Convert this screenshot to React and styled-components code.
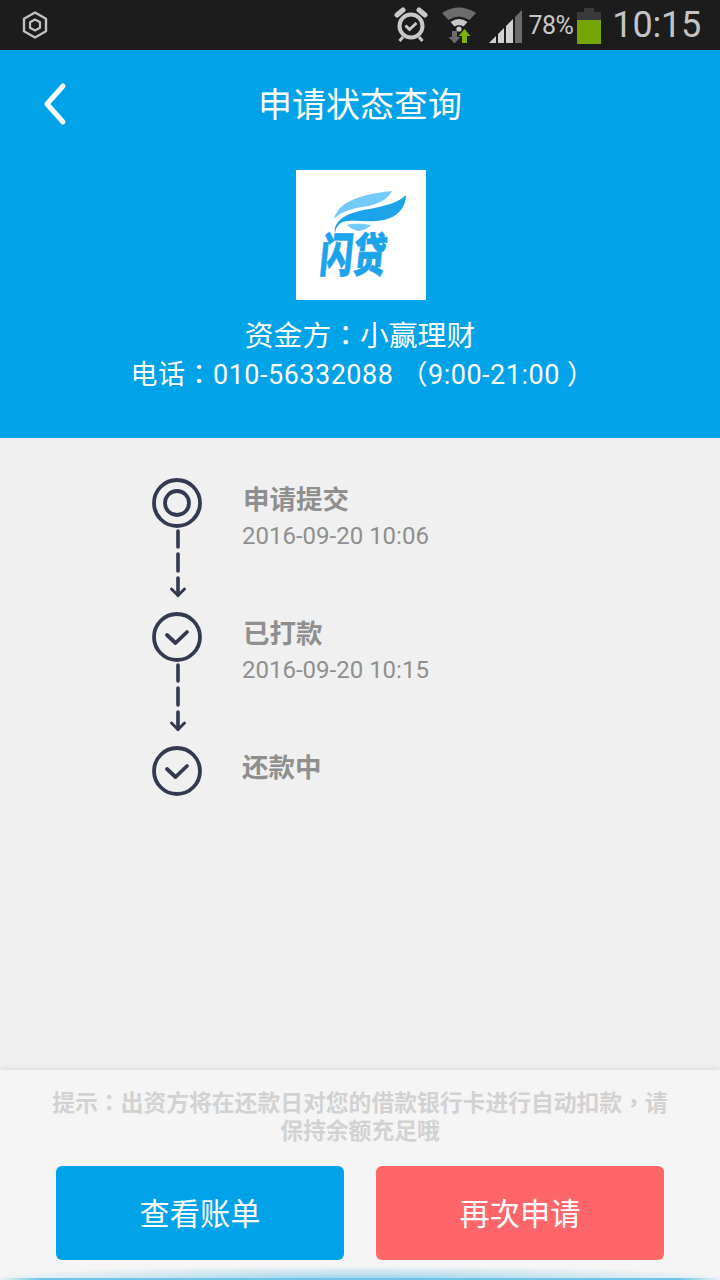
import React from "react";
import styled, { createGlobalStyle } from "styled-components";

const FONT = `Roboto, "Noto Sans CJK TC", sans-serif`;

const GlobalStyle = createGlobalStyle`
  html, body {
    margin: 0;
    padding: 0;
    background: #f0f0f0;
  }
  * {
    box-sizing: border-box;
  }
`;

const Page = styled.div`
  display: flex;
  flex-direction: column;
  width: 720px;
  height: 1280px;
  overflow: hidden;
  font-family: ${FONT};
  background: #f0f0f0;
`;

const StatusBar = styled.div`
  display: flex;
  align-items: center;
  flex: none;
  height: 50px;
  padding: 0 19px 0 20px;
  background: #1c1c1c;
`;

const StatusRight = styled.div`
  display: flex;
  align-items: center;
  margin-left: auto;
`;

const BatteryText = styled.span`
  margin: 0 4px 0 5px;
  font-size: 25px;
  letter-spacing: -0.5px;
  color: #c8c8c8;
`;

const Clock = styled.span`
  margin-left: 11px;
  font-size: 36px;
  letter-spacing: -0.2px;
  color: #c4c4c4;
`;

const Header = styled.header`
  display: flex;
  flex-direction: column;
  align-items: center;
  flex: none;
  height: 388px;
  background: #00a2e8;
  color: #fff;
`;

const NavBar = styled.div`
  display: flex;
  align-items: center;
  justify-content: center;
  position: relative;
  width: 100%;
  height: 110px;
`;

const BackButton = styled.svg`
  position: absolute;
  left: 41px;
  top: 32px;
  width: 28px;
  height: 44px;
`;

const Title = styled.h1`
  margin: 0;
  font-size: 34px;
  font-weight: 400;
  line-height: 1;
`;

const LogoBox = styled.div`
  position: relative;
  width: 130px;
  height: 130px;
  margin: 10px 0 0 2px;
  background: #fff;
`;

const LogoMark = styled.svg`
  display: block;
  width: 130px;
  height: 130px;
`;

const LogoText = styled.span`
  position: absolute;
  left: 27px;
  top: 58px;
  font-size: 33px;
  font-weight: 900;
  line-height: 1.2;
  white-space: nowrap;
  color: #1ba4ea;
  -webkit-text-stroke: 0.5px #1ba4ea;
  transform-origin: left top;
  transform: scaleY(1.42) skewX(-8deg);
`;

const Funder = styled.div`
  margin-top: 18px;
  font-size: 28.8px;
  line-height: 36px;
`;

const Phone = styled.div`
  margin: 3px 0 0 5px;
  font-size: 27px;
  line-height: 36px;
  letter-spacing: 0.5px;
  white-space: pre;
`;

const Timeline = styled.main`
  display: flex;
  flex-direction: column;
  flex: 1;
  padding: 40px 0 0 152px;
`;

const Step = styled.div`
  display: flex;
  height: ${(p) => (p.$last ? "50px" : "134px")};
`;

const Track = styled.div`
  display: flex;
  flex-direction: column;
  align-items: center;
  flex: none;
  width: 50px;
`;

const StepIcon = styled.svg`
  flex: none;
  width: 50px;
  height: 50px;
`;

const Connector = styled.svg`
  flex: none;
  width: 20px;
  height: 73px;
  margin-top: 1px;
`;

const StepBody = styled.div`
  display: flex;
  flex-direction: column;
  margin-left: ${(p) => (p.$last ? "40px" : "41px")};
  padding-top: 6px;
`;

const StepTitle = styled.div`
  font-size: 26.5px;
  font-weight: 700;
  line-height: 32px;
  color: #8f8f8f;
`;

const StepTime = styled.div`
  margin-top: 4px;
  margin-left: -1px;
  font-size: 24px;
  line-height: 32px;
  color: #8f8f8f;
`;

const Panel = styled.footer`
  display: flex;
  flex-direction: column;
  align-items: center;
  position: relative;
  flex: none;
  height: 210px;
  padding-top: 20px;
  background: #f5f5f5;
  box-shadow: 0 -1px 7px rgba(0, 0, 0, 0.09);

  &::after {
    content: "";
    position: absolute;
    left: 0;
    right: 0;
    bottom: 0;
    height: 14px;
    background:
      linear-gradient(90deg, rgba(110, 195, 230, 0) 0%, #6ec3e6 6%, #6ec3e6 94%, rgba(110, 195, 230, 0) 100%) bottom / 100% 2px no-repeat,
      radial-gradient(ellipse 55% 100% at 50% 100%, rgba(110, 195, 230, 0.75) 0%, rgba(110, 195, 230, 0.35) 50%, rgba(244, 244, 244, 0) 100%);
  }
`;

const Hint = styled.p`
  width: 620px;
  margin: 0;
  font-size: 22.8px;
  font-weight: 700;
  line-height: 28px;
  text-align: center;
  color: #d2d2d2;
`;

const Actions = styled.div`
  display: flex;
  gap: 32px;
  margin-top: 20px;
`;

const ActionButton = styled.button`
  width: 288px;
  height: 94px;
  padding: 0 0 3px;
  border: 0;
  border-radius: 6px;
  font-family: ${FONT};
  font-size: 30.2px;
  color: #fff;
  background: ${(p) => p.$bg};
`;

function HexIcon() {
  return (
    <svg width="30" height="30" viewBox="0 0 30 30" fill="none" stroke="#c0c0c0">
      <path d="M15 2.5 L26 8.8 V21.2 L15 27.5 L4 21.2 V8.8 Z" strokeWidth="2.4" strokeLinejoin="round" />
      <path d="M15 9.5 L20 12.2 V17.8 L15 20.5 L10 17.8 V12.2 Z" strokeWidth="2.2" strokeLinejoin="round" />
    </svg>
  );
}

function AlarmIcon() {
  return (
    <svg width="34" height="36" viewBox="0 0 34 36" fill="none" stroke="#c8c8c8">
      <circle cx="17" cy="19" r="11.5" strokeWidth="4" />
      <path d="M11.5 18.5 L15.5 22.5 L22.5 16" strokeWidth="3" />
      <path d="M3 8 L9 3 M31 8 L25 3" strokeWidth="5" strokeLinecap="round" />
      <path d="M9 30 L5.5 34 M25 30 L28.5 34" strokeWidth="3" />
    </svg>
  );
}

function WifiIcon() {
  return (
    <svg width="36" height="36" viewBox="0 0 36 36" fill="none" style={{ marginLeft: 13 }}>
      <path d="M1 6 Q18 -5 35 6 L28.5 13 Q18 6 7.5 13 Z" fill="#6c6c6c" />
      <path d="M9.5 15 Q18 9 26.5 15 L22.5 19.5 Q18 16.5 13.5 19.5 Z" fill="#c8c8c8" />
      <circle cx="18" cy="22" r="2.6" fill="#c8c8c8" />
      <path d="M11 36 V30 H7.5 L13.5 23.5 L19.5 30 H16 V36 Z" fill="#6c6c6c" transform="rotate(180 13.5 30)" />
      <path d="M21 36 V29 H17.5 L23.5 22 L29.5 29 H26 V36 Z" fill="#7cb300" />
    </svg>
  );
}

function SignalIcon() {
  return (
    <svg width="34" height="34" viewBox="0 0 34 34" style={{ marginLeft: 12, marginTop: 3 }}>
      <path d="M0 33 L7 26 V33 Z" fill="#d0d0d0" />
      <path d="M9 33 V24 L15 18 V33 Z" fill="#d0d0d0" />
      <path d="M17 33 V16 L24 9 V33 Z" fill="#d0d0d0" />
      <path d="M26 33 V7 L33 0 V33 Z" fill="#6c6c6c" />
    </svg>
  );
}

function BatteryIcon() {
  return (
    <svg width="24" height="36" viewBox="0 0 24 36" style={{ marginTop: 2 }}>
      <rect x="7" y="0" width="10" height="5" fill="#3a3a3a" />
      <rect x="0" y="4" width="24" height="8" fill="#3a3a3a" />
      <rect x="0" y="12" width="24" height="24" fill="#74a500" />
    </svg>
  );
}

function LogoWing() {
  return (
    <LogoMark viewBox="0 0 130 130">
      <path d="M38 49 C42 34 58 25 96 21 C92 29 84 33 73 36 C60 38 46 40 38 49 Z" fill="#74caf9" />
      <path d="M39 63 C37 50 52 42 74 39 C88 36 102 33 110 25 C110 38 101 47 88 50 C72 53 58 49 47 52 C42 54 40 58 39 63 Z" fill="#1ba4ea" />
      <path d="M51 55 C58 53 66 54 75 55 C71 59 65 61 62 61 C58 60 54 58 51 55 Z" fill="#74caf9" />
    </LogoMark>
  );
}

function RingIcon() {
  return (
    <StepIcon viewBox="0 0 50 50" fill="none" stroke="#33394f">
      <circle cx="25" cy="25" r="23" strokeWidth="3.8" />
      <circle cx="25" cy="25" r="12" strokeWidth="3.8" />
    </StepIcon>
  );
}

function CheckIcon() {
  return (
    <StepIcon viewBox="0 0 50 50" fill="none" stroke="#33394f">
      <circle cx="25" cy="25" r="23" strokeWidth="3.8" />
      <path d="M15 23 L23.5 31 L35 20" strokeWidth="3.8" strokeLinecap="round" strokeLinejoin="round" />
    </StepIcon>
  );
}

function DashedArrow() {
  return (
    <Connector viewBox="0 0 20 73" fill="none" stroke="#33394f" strokeLinecap="round">
      <path d="M11 2 V18 M11 25 V42 M11 49 V66" strokeWidth="3.6" />
      <path d="M4.5 60 L11 66.5 L17.5 60" strokeWidth="3" />
    </Connector>
  );
}

export default function App() {
  const steps = [
    { id: 1, title: "申请提交", time: "2016-09-20 10:06", icon: <RingIcon /> },
    { id: 2, title: "已打款", time: "2016-09-20 10:15", icon: <CheckIcon /> },
    { id: 3, title: "还款中", icon: <CheckIcon /> },
  ];

  return (
    <Page>
      <GlobalStyle />
      <StatusBar>
        <HexIcon />
        <StatusRight>
          <AlarmIcon />
          <WifiIcon />
          <SignalIcon />
          <BatteryText>78%</BatteryText>
          <BatteryIcon />
          <Clock>10:15</Clock>
        </StatusRight>
      </StatusBar>

      <Header>
        <NavBar>
          <BackButton viewBox="0 0 28 44" fill="none" stroke="#fff">
            <path d="M22 4 L6 22 L22 40" strokeWidth="5" strokeLinecap="round" strokeLinejoin="round" />
          </BackButton>
          <Title>申请状态查询</Title>
        </NavBar>
        <LogoBox>
          <LogoWing />
          <LogoText>闪贷</LogoText>
        </LogoBox>
        <Funder>资金方：小赢理财</Funder>
        <Phone>电话：010-56332088 （9:00-21:00 ）</Phone>
      </Header>

      <Timeline>
        {steps.map((step, i) => {
          const last = i === steps.length - 1;
          return (
            <Step key={step.id} $last={last}>
              <Track>
                {step.icon}
                {!last && <DashedArrow />}
              </Track>
              <StepBody $last={last}>
                <StepTitle>{step.title}</StepTitle>
                {step.time && <StepTime>{step.time}</StepTime>}
              </StepBody>
            </Step>
          );
        })}
      </Timeline>

      <Panel>
        <Hint>提示：出资方将在还款日对您的借款银行卡进行自动扣款，请保持余额充足哦</Hint>
        <Actions>
          <ActionButton $bg="#00a2e8">查看账单</ActionButton>
          <ActionButton $bg="#ff6669">再次申请</ActionButton>
        </Actions>
      </Panel>
    </Page>
  );
}
